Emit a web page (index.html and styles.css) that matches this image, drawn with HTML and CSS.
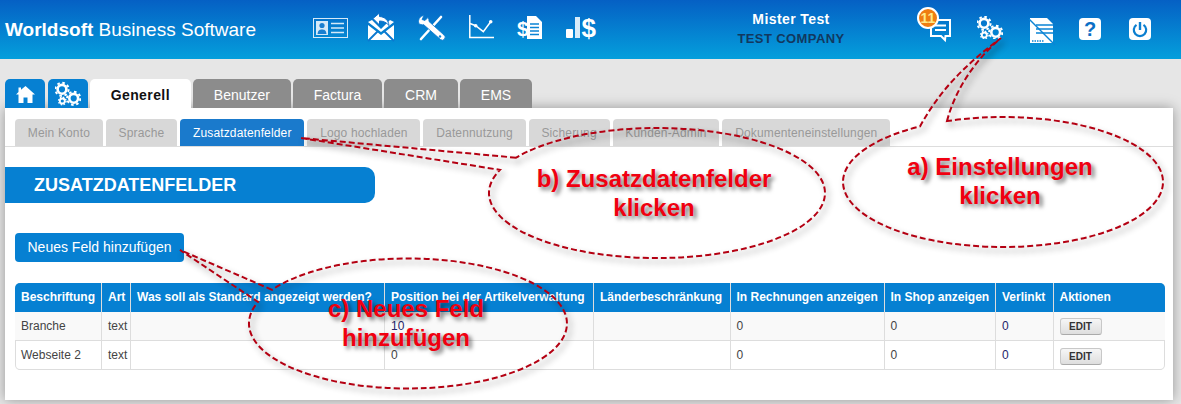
FILE: index.html
```html
<!DOCTYPE html>
<html lang="de">
<head>
    <meta charset="UTF-8">
    <title>Worldsoft Business Software</title>
    <link rel="stylesheet" href="styles.css">
</head>
<body>
    <svg class="defs" width="0" height="0">
        <symbol id="gears" viewBox="8 6 26 23">
            <circle class="gear-ring" cx="15" cy="13.3" r="4.4" stroke-width="2.6"/>
            <circle class="gear-teeth" cx="15" cy="13.3" r="6.6" stroke-width="2" stroke-dasharray="2.6 2.6"/>
            <circle class="gear-ring" cx="15.3" cy="25" r="2.5" stroke-width="1.8"/>
            <circle class="gear-teeth" cx="15.3" cy="25" r="3.8" stroke-width="1.3" stroke-dasharray="1.5 1.5"/>
            <circle class="gear-ring" cx="26.7" cy="22.3" r="4.4" stroke-width="2.6"/>
            <circle class="gear-teeth" cx="26.7" cy="22.3" r="6.6" stroke-width="2" stroke-dasharray="2.6 2.6"/>
        </symbol>
    </svg>

    <header class="topbar">
        <div class="brand"><b>Worldsoft</b> Business Software</div>

        <nav class="main-nav">
            <!-- Kontakte -->
            <a class="slot"><svg class="icon" viewBox="0 0 40 40">
                <rect x="3.5" y="8.5" width="34" height="19" fill="none" stroke="#d5e9f8"/>
                <rect x="6" y="11" width="12" height="14" fill="#d5e9f8"/>
                <circle cx="12" cy="15.5" r="2.6" fill="#1a7fd0"/>
                <path d="M7.5 24c.5-4 2.500-4.500 4.500-4.500s4 .5 4.500 4.500z" fill="#1a7fd0"/>
                <path d="M21 13.500h13M21 18h13M21 22.500h13" stroke="#d5e9f8" stroke-width="1.600"/>
            </svg></a>
            <!-- Post -->
            <a class="slot"><svg class="icon" viewBox="0 0 40 40">
                <path d="M8 15l13 10 13-10v15H8z" fill="#fff"/>
                <path d="M8 31l10-10M34 31L24 21" stroke="#0b78cf" stroke-width="1.800"/>
                <path d="M8 12l4-2 9 9 9-9 4 2-13 10z" fill="#fff"/>
                <path d="M13 8.500L19.500 3v3.500c5 .3 9 3.500 9.500 9-2.500-3-5.500-4.500-9.500-4.500V15z" fill="#fff" stroke="#0b6fca"/>
            </svg></a>
            <!-- Werkzeuge -->
            <a class="slot"><svg class="icon" viewBox="0 0 40 40">
                <path d="M31 7L11 29" stroke="#fff" stroke-width="2.600" stroke-linecap="round"/>
                <path d="M14 5.500a6 6 0 0 0-5 8.500l4 1 .5-.5 17 15a2.800 2.800 0 0 0 3.500-4.500L19 11.500a6 6 0 0 0-1-4l-3 3-3-1z" fill="#fff" stroke="#0b78cf" stroke-width=".8"/>
                <circle cx="30" cy="26.500" r="1.200" fill="#0b84d5"/>
            </svg></a>
            <!-- Statistik -->
            <a class="slot"><svg class="icon" viewBox="0 0 40 40">
                <path d="M9.800 5v22.500H34" fill="none" stroke="#fff" stroke-width="1.500"/>
                <path d="M10 13.500l5.700 2.200 7.600 6 7.400-10" fill="none" stroke="#fff" stroke-width="1.500"/>
                <circle cx="15.700" cy="15.700" r="1.800" fill="#fff"/>
                <circle cx="30.700" cy="11.700" r="1.800" fill="#fff"/>
            </svg></a>
            <!-- Rechnungen -->
            <a class="slot"><svg class="icon" viewBox="0 0 40 40">
                <path d="M17 6h9l6 6v17H17z" fill="#fff"/>
                <path d="M20 14h9M20 17.500h9M20 21h9M20 24.500h9" stroke="#0b84d5" stroke-width="1.300"/>
                <text class="glyph" x="7" y="26" font-size="21">$</text>
            </svg></a>
            <!-- Umsatz -->
            <a class="slot"><svg class="icon" viewBox="0 0 40 40">
                <rect x="6" y="19" width="7" height="9" rx="1" fill="#fff"/>
                <rect x="15" y="7" width="5" height="21" fill="#d7ecfa"/>
                <text class="glyph" x="21.500" y="26.500" font-size="26">$</text>
            </svg></a>
        </nav>

        <div class="user">
            <div class="user-name">Mister Test</div>
            <div class="user-company">TEST COMPANY</div>
        </div>

        <nav class="actions">
            <a class="slot slot-msg">
                <span class="badge">11</span>
                <svg class="icon" viewBox="0 0 40 40">
                    <path d="M11 10h19v16h-4.500l-.5 4-4-4H11z" fill="none" stroke="#fff" stroke-width="2"/>
                    <path d="M15 15.500h11M15 20h11" stroke="#fff" stroke-width="1.800"/>
                </svg>
            </a>
            <a class="slot"><svg class="gears-top"><use href="#gears"/></svg></a>
            <a class="slot"><svg class="icon" viewBox="0 0 40 40">
                <path d="M10 8h17l6 6v19H10z" fill="#fff"/>
                <path d="M9 9l26 26" stroke="#0b84d5" stroke-width="1.500"/>
                <path d="M16 15h17M16 19h17M16 23h17" stroke="#0b84d5" stroke-width="1.500"/>
                <path d="M12 31h12" stroke="#0b84d5" stroke-width="1.500" stroke-dasharray="1.500 1"/>
            </svg></a>
            <a class="slot"><span class="square-btn">?</span></a>
            <a class="slot"><span class="square-btn">
                <svg class="power" viewBox="0 0 22 22">
                    <path d="M7.500 6.800a6.200 6.200 0 1 0 7 0" fill="none" stroke="#0b7fd0" stroke-width="2.200"/>
                    <path d="M11 4v8" stroke="#0b7fd0" stroke-width="2.400"/>
                </svg>
            </span></a>
        </nav>
    </header>

    <div class="content">
        <div class="tabs">
            <a class="tab tab-icon">
                <svg class="home" viewBox="0 0 19 17"><path d="M9.500 0L19 8.500h-2.500V17H11.500v-5.500h-4V17H2.500V8.500H0L2.500 6V1.500h2.500V3.700z" fill="#fff"/></svg>
            </a>
            <a class="tab tab-icon">
                <svg class="gears-tab"><use href="#gears"/></svg>
            </a>
            <a class="tab active">Generell</a>
            <a class="tab">Benutzer</a>
            <a class="tab">Factura</a>
            <a class="tab">CRM</a>
            <a class="tab">EMS</a>
        </div>

        <div class="panel">
            <div class="subtabs">
                <a class="subtab">Mein Konto</a>
                <a class="subtab">Sprache</a>
                <a class="subtab active">Zusatzdatenfelder</a>
                <a class="subtab">Logo hochladen</a>
                <a class="subtab">Datennutzung</a>
                <a class="subtab">Sicherung</a>
                <a class="subtab">Kunden-Admin</a>
                <a class="subtab">Dokumenteneinstellungen</a>
            </div>

            <h1 class="page-title">ZUSATZDATENFELDER</h1>

            <a class="btn-add">Neues Feld hinzufügen</a>

            <div class="table-wrap">
                <table class="fields">
                    <colgroup>
                        <col class="c1"><col class="c2"><col class="c3"><col class="c4"><col class="c5">
                        <col class="c6"><col class="c7"><col class="c8"><col class="c9">
                    </colgroup>
                    <thead>
                        <tr>
                            <th>Beschriftung</th>
                            <th>Art</th>
                            <th>Was soll als Standard angezeigt werden?</th>
                            <th>Position bei der Artikelverwaltung</th>
                            <th>Länderbeschränkung</th>
                            <th>In Rechnungen anzeigen</th>
                            <th>In Shop anzeigen</th>
                            <th>Verlinkt</th>
                            <th>Aktionen</th>
                        </tr>
                    </thead>
                    <tbody>
                        <tr>
                            <td>Branche</td><td>text</td><td></td><td class="link">10</td><td></td>
                            <td>0</td><td>0</td><td class="link">0</td><td><a class="btn-edit">EDIT</a></td>
                        </tr>
                        <tr>
                            <td>Webseite 2</td><td>text</td><td></td><td>0</td><td></td>
                            <td>0</td><td>0</td><td class="link">0</td><td><a class="btn-edit">EDIT</a></td>
                        </tr>
                    </tbody>
                </table>
            </div>
        </div>
    </div>

    <!-- Anleitung: Sprechblasen liegen ueber der Seite -->
    <svg class="callouts" viewBox="0 0 1181 404">
        <path d="M947 121.110C955 90 975 60 1001 38C965 65 940 90 920 126.430A160 65 0 1 0 947 121.110Z"/>
        <path d="M516 157.700L301 138L500 169.900A168 65 0 1 0 516 157.700Z"/>
        <path d="M272 289.800L180 250L258 301.900A159 65 0 1 0 272 289.800Z"/>
    </svg>
    <div class="note note-a">a) Einstellungen<br>klicken</div>
    <div class="note note-b">b) Zusatzdatenfelder<br>klicken</div>
    <div class="note note-c">c) Neues Feld<br>hinzufügen</div>
</body>
</html>
```

FILE: styles.css
```css
* {
    box-sizing: border-box;
    margin: 0;
    padding: 0;
}

html, body {
    width: 1181px;
    height: 404px;
    overflow: hidden;
}

body {
    font-family: 'Liberation Sans', Arial, sans-serif;
    background-color: #e6e6e6;
    color: #444;
    position: relative;
}

.defs {
    position: absolute;
}

.gear-ring {
    fill: none;
    stroke: #fff;
}

.gear-teeth {
    fill: none;
    stroke: #fff;
}

/* Kopfzeile */
.topbar {
    height: 59px;
    display: flex;
    align-items: center;
    padding-right: 16px;
    background: linear-gradient(to bottom, #0560c4, #049fdc);
    color: #fff;
}

.brand {
    width: 305px;
    padding-left: 5px;
    font-size: 19px;
}

.main-nav,
.actions {
    display: flex;
}

.actions {
    margin-left: auto;
}

.slot {
    width: 50px;
    height: 40px;
    display: flex;
    align-items: center;
    justify-content: center;
    position: relative;
}

.icon {
    width: 40px;
    height: 40px;
    display: block;
}

.glyph {
    font-family: 'Liberation Sans', Arial, sans-serif;
    font-weight: bold;
    fill: #fff;
}

.gears-top {
    width: 26px;
    height: 23px;
    margin-top: -4px;
}

.user {
    width: 172px;
    margin: -2px 0 0 100px;
    text-align: center;
    font-weight: bold;
}

.user-name {
    font-size: 14px;
    letter-spacing: 0.4px;
    margin-bottom: 4px;
}

.user-company {
    font-size: 13px;
    letter-spacing: 0.4px;
    color: #12385f;
}

.badge {
    position: absolute;
    left: 2px;
    top: -3px;
    width: 22px;
    height: 22px;
    border-radius: 50%;
    border: 2px solid #fff;
    background: #ef7d12;
    color: #ffe98a;
    font-size: 14px;
    font-weight: bold;
    line-height: 18px;
    text-align: center;
    z-index: 2;
}

.square-btn {
    width: 22px;
    height: 22px;
    margin-top: -2px;
    border-radius: 4px;
    background: #fff;
    color: #0b6fc6;
    font-size: 20px;
    font-weight: bold;
    line-height: 22px;
    text-align: center;
}

.power {
    width: 22px;
    height: 22px;
    display: block;
}

/* Reiter */
.content {
    padding: 20px 8px 0 5px;
}

.tabs {
    display: flex;
    gap: 2.500px;
    height: 29px;
    position: relative;
    z-index: 1;
}

.tab {
    padding: 0 20.700px;
    background: #8c8c8c;
    color: #fff;
    font-size: 14px;
    line-height: 32px;
    border-radius: 5px 5px 0 0;
}

.tab.active {
    background: #fff;
    color: #111;
    font-weight: bold;
    letter-spacing: 0.4px;
}

.tab-icon {
    width: 40px;
    padding: 0;
    background: #0680d2;
    display: flex;
    align-items: center;
    justify-content: center;
}

.home {
    width: 19px;
    height: 17px;
    margin-top: 2px;
}

.gears-tab {
    width: 26px;
    height: 25px;
}

.panel {
    height: 292px;
    background: #fff;
    box-shadow: 0 0 12px rgba(0, 0, 0, 0.35);
}

.subtabs {
    display: flex;
    gap: 3px;
    height: 39px;
    padding: 11px 0 0 10px;
    border-bottom: 1px solid #ddd;
}

.subtab {
    padding: 0 12.800px;
    background: #d8d8d8;
    color: #999;
    font-size: 12px;
    letter-spacing: 0.15px;
    line-height: 28px;
    border-radius: 4px 4px 0 0;
}

.subtab.active {
    background: #1a7acc;
    color: #fff;
}

.page-title {
    width: 370px;
    height: 36px;
    margin-top: 20px;
    padding-left: 29px;
    background: #0680d2;
    color: #fff;
    font-size: 18px;
    line-height: 36px;
    border-radius: 0 10px 10px 0;
}

.btn-add {
    display: block;
    width: 169px;
    height: 29px;
    margin: 30px 0 0 10px;
    background: #0680d2;
    color: #fff;
    font-size: 14px;
    line-height: 29px;
    text-align: center;
    border-radius: 4px;
}

.table-wrap {
    width: 1150px;
    margin: 21px 0 0 10px;
    border-radius: 5px;
    overflow: hidden;
    box-shadow: inset 0 0 0 1px #ddd;
}

.fields {
    width: 1150px;
    table-layout: fixed;
    border-collapse: collapse;
    font-size: 12px;
}

.c1 { width: 86.500px; }
.c2 { width: 29px; }
.c3 { width: 254px; }
.c4 { width: 209px; }
.c5 { width: 136.500px; }
.c6 { width: 154px; }
.c7 { width: 111.500px; }
.c8 { width: 57.500px; }
.c9 { width: 112px; }

.fields th {
    height: 28.500px;
    padding: 0 6px;
    background: #0680d2;
    color: #fff;
    text-align: left;
    white-space: nowrap;
    border-left: 1px solid #ddd;
}

.fields td {
    height: 29px;
    padding: 0 6px;
    border-left: 1px solid #ddd;
    border-top: 1px solid #ddd;
    white-space: nowrap;
}

.fields td.link {
    color: #25256a;
}

.fields th:first-child,
.fields td:first-child {
    border-left: 0;
}

.fields tbody tr:first-child td {
    background: #f9f9f9;
    border-top: 0;
}

.fields tbody tr:last-child td {
    border-bottom: 1px solid #ddd;
}

.btn-edit {
    display: block;
    width: 42px;
    height: 17px;
    margin-top: 2px;
    background: linear-gradient(to bottom, #f6f6f6, #dedede);
    border: 1px solid #c8c8c8;
    border-bottom-color: #aaa;
    border-radius: 3px;
    color: #333;
    font-size: 10px;
    font-weight: bold;
    line-height: 16px;
    text-align: center;
}

/* Sprechblasen */
.callouts {
    position: absolute;
    left: 0;
    top: 0;
    width: 1181px;
    height: 404px;
    pointer-events: none;
}

.callouts path {
    fill: none;
    stroke: #b40012;
    stroke-width: 2;
    stroke-dasharray: 6 3;
    filter: drop-shadow(3px 4px 3px rgba(0, 0, 0, 0.45));
}

.note {
    position: absolute;
    color: #f00010;
    font-size: 24px;
    font-weight: bold;
    line-height: 29px;
    text-align: center;
    white-space: nowrap;
    text-shadow: 3px 3px 4px rgba(0, 0, 0, 0.55);
}

.note-a {
    left: 900px;
    top: 152px;
    width: 200px;
}

.note-b {
    left: 534px;
    top: 164px;
    width: 240px;
}

.note-c {
    left: 306px;
    top: 294px;
    width: 200px;
}
```
